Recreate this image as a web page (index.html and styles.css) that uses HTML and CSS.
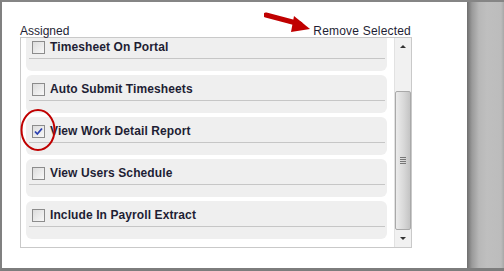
FILE: index.html
```html
<!DOCTYPE html>
<html lang="en">
<head>
    <meta charset="UTF-8">
    <title>Assigned permissions</title>
    <link rel="stylesheet" href="styles.css">
</head>
<body>
    <div class="frame">
        <div class="panel">
            <div class="head">
                <span>Assigned</span>
                <a class="remove">Remove Selected</a>
            </div>
            <div class="listbox">
                <div class="items">
                    <div class="item">
                        <div class="row"><span class="box"></span><span class="label">Timesheet On Portal</span></div>
                        <div class="rule"></div>
                    </div>
                    <div class="item">
                        <div class="row"><span class="box"></span><span class="label">Auto Submit Timesheets</span></div>
                        <div class="rule"></div>
                    </div>
                    <div class="item">
                        <div class="row"><span class="box checked"><svg viewBox="0 0 13 13" width="13" height="13"><path d="M3 6.5 L5.3 9 L10 3.5" fill="none" stroke="#2a3fb0" stroke-width="1.8"/></svg></span><span class="label">View Work Detail Report</span></div>
                        <div class="rule"></div>
                    </div>
                    <div class="item">
                        <div class="row"><span class="box"></span><span class="label">View Users Schedule</span></div>
                        <div class="rule"></div>
                    </div>
                    <div class="item">
                        <div class="row"><span class="box"></span><span class="label">Include In Payroll Extract</span></div>
                        <div class="rule"></div>
                    </div>
                </div>
                <div class="scrollbar">
                    <div class="btn"><span class="up"></span></div>
                    <div class="track">
                        <div class="thumb"><span class="grip"></span></div>
                    </div>
                    <div class="btn"><span class="down"></span></div>
                </div>
            </div>

            <!-- annotations drawn over the screenshot -->
            <svg class="arrow" width="60" height="30" viewBox="0 0 60 30">
                <path d="M2 5 L36 14" stroke="#c00000" stroke-width="5" stroke-linecap="round"/>
                <path d="M30 6 L46 19 L27 22 Z" fill="#c00000"/>
            </svg>
            <svg class="circle" width="40" height="46" viewBox="0 0 40 46">
                <ellipse cx="19" cy="23" rx="16.5" ry="20" fill="none" stroke="#c00000" stroke-width="2"/>
            </svg>
        </div>
        <div class="shadow"></div>
    </div>
</body>
</html>
```

FILE: styles.css
```css
body {
    margin: 0;
    padding: 0;
    font-family: "Liberation Sans", Arial, sans-serif;
    background-color: #808080;
}
.frame {
    display: flex;
    width: 504px;
    height: 271px;
    box-sizing: border-box;
    border-top: 2px solid #858585;
    border-left: 2px solid #808080;
    border-bottom: 3px solid #7d7d7d;
}
.panel {
    position: relative;
    width: 465px;
    height: 266px;
    background-color: white;
    padding: 22px 0 0 18px;
    box-sizing: border-box;
}
.shadow {
    flex: 1;
    background: linear-gradient(to right, #6e6e6e 0px, #9a9a9a 5px, #b8b8b8 12px, #bfbfbf 20px, #bcbcbc 34px, #a8a8a8 37px);
}
.head {
    display: flex;
    justify-content: space-between;
    width: 392px;
    font-size: 12px;
    line-height: 14px;
    color: #1e1e34;
    margin-bottom: -1px;
}
.remove {
    padding-right: 1px;
    letter-spacing: 0.2px;
}
.listbox {
    display: flex;
    width: 392px;
    height: 211px;
    box-sizing: border-box;
    border: 1px solid #c9c9c9;
    overflow: hidden;
}
.items {
    flex: 1;
    padding: 0 7px 0 5px;
    margin-top: -5px;
}
.item {
    height: 38px;
    margin-bottom: 4px;
    background-color: #efefef;
    border-radius: 6px;
    padding-top: 7px;
    box-sizing: border-box;
}
.row {
    display: flex;
    align-items: center;
    height: 14px;
    padding-left: 6px;
}
.box {
    width: 13px;
    height: 13px;
    box-sizing: border-box;
    border: 1px solid #8c8c8c;
    background: linear-gradient(135deg, #dcdcdc, #f8f8f8);
    margin-right: 5px;
    position: relative;
}
.box svg {
    position: absolute;
    left: -1px;
    top: -1px;
}
.label {
    font-size: 12px;
    font-weight: bold;
    color: #1e1e34;
    letter-spacing: 0.1px;
}
.rule {
    height: 1px;
    background-color: #c6c6c6;
    margin: 4px 2px 0 3px;
}
.scrollbar {
    width: 16px;
    display: flex;
    flex-direction: column;
    background-color: #f1f1f1;
    border-left: 1px solid #e2e2e2;
}
.btn {
    height: 17px;
    display: flex;
    align-items: center;
    justify-content: center;
}
.up {
    width: 0;
    height: 0;
    border-left: 3px solid transparent;
    border-right: 3px solid transparent;
    border-bottom: 3px solid #333;
}
.down {
    width: 0;
    height: 0;
    border-left: 3px solid transparent;
    border-right: 3px solid transparent;
    border-top: 3px solid #333;
}
.track {
    flex: 1;
    display: flex;
    flex-direction: column;
    justify-content: flex-end;
}
.thumb {
    height: 139px;
    border: 1px solid #a9a9a9;
    border-radius: 2px;
    background: linear-gradient(to right, #ececec, #d6d6d6 60%, #c4c4c4);
    display: flex;
    align-items: center;
    justify-content: center;
    box-sizing: border-box;
}
.grip {
    width: 6px;
    height: 7px;
    background: repeating-linear-gradient(to bottom, #777 0px, #777 1px, transparent 1px, transparent 2px);
}
.arrow {
    position: absolute;
    left: 262px;
    top: 8px;
}
.circle {
    position: absolute;
    left: 17px;
    top: 105px;
}
```
